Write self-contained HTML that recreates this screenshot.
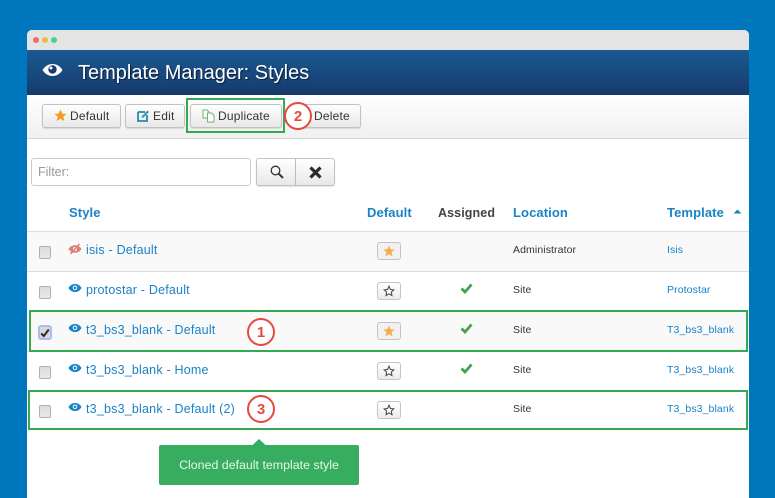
<!DOCTYPE html>
<html>
<head>
<meta charset="utf-8">
<style>
html,body{margin:0;padding:0}
body{width:775px;height:498px;background:#0076bc;overflow:hidden;position:relative;font-family:"Liberation Sans",sans-serif;color:#333}
.a{position:absolute}
#win{left:27px;top:30px;width:722px;height:468px;background:#fff;border-radius:5px 5px 0 0}
#bar{left:27px;top:30px;width:722px;height:20px;background:#e4e4e4;border-radius:5px 5px 0 0}
.dot{width:6px;height:6px;border-radius:50%;top:37px}
#head{left:27px;top:50px;width:722px;height:45px;background:linear-gradient(#1a5a92,#173a6b)}
#title{left:78px;top:61px;font-size:20px;line-height:24px;color:#fff;text-shadow:1px 1px 1px #0a1c38;white-space:nowrap}
#tool{left:27px;top:95px;width:722px;height:43px;background:linear-gradient(#fff,#f0f0f0);border-bottom:1px solid #d6d6d6}
.btn{box-sizing:border-box;height:24px;top:104px;border:1px solid #c2c2c2;border-radius:3px;background:linear-gradient(#fff,#e9e9e9);box-shadow:0 1px 1px rgba(0,0,0,.12);font-size:12px;letter-spacing:.2px;line-height:22px;color:#333;white-space:nowrap}
.btn span{position:absolute;top:0}
.btn svg{position:absolute}
.th{top:205px;font-size:13px;font-weight:bold;letter-spacing:.1px;line-height:15px;color:#1a82c8;white-space:nowrap}
.line{left:27px;width:722px;height:1px;background:#ddd}
.lnk{font-size:12.5px;letter-spacing:.2px;line-height:16px;color:#1a82c8;white-space:nowrap}
.sm{font-size:10.5px;letter-spacing:.1px;line-height:14px;white-space:nowrap}
.cb{box-sizing:border-box;left:39px;width:12px;height:13px;border:1px solid #b0b0b0;border-radius:2px;background:linear-gradient(#dcdcdc,#e8e8e8)}
.sb{box-sizing:border-box;left:377px;width:24px;height:18px;border:1px solid #c4c4c4;border-radius:3px;background:linear-gradient(#fff,#ececec)}
.sb.on{background:#f1f1f1}
.sb svg{position:absolute;left:5px;top:2px}
.gb{box-sizing:border-box;border:2px solid #34a853}
.cir{box-sizing:border-box;width:28px;height:28px;border:2px solid #e8493f;border-radius:50%;background:#fff;color:#e8493f;font-size:15px;font-weight:bold;line-height:26px;text-align:center}
</style>
</head>
<body>
<div class="a" id="win"></div>
<div class="a" id="bar"></div>
<div class="a dot" style="left:33px;background:#ee6a6a"></div>
<div class="a dot" style="left:42px;background:#e8bf44"></div>
<div class="a dot" style="left:51px;background:#3ed68c"></div>

<div class="a" id="head"></div>
<svg class="a" style="left:42px;top:63px" width="21" height="14" viewBox="0 0 21 14"><path d="M0.500 7C3 3 6.500 1 10.500 1S18 3 20.500 7C18 11 14.500 13 10.500 13S3 11 0.500 7Z" fill="#fff"/><circle cx="10.500" cy="6.500" r="4.200" fill="#173a6b"/><circle cx="9" cy="5" r="1.500" fill="#fff"/></svg>
<div class="a" id="title">Template Manager: Styles</div>

<div class="a" id="tool"></div>
<div class="a btn" style="left:42px;width:79px"><svg style="left:11px;top:4px" width="13" height="13" viewBox="0 0 14 14"><path d="M7 0.500L9 5L13.500 5.400L10 8.400L11.200 13L7 10.500L2.800 13L4 8.400L0.500 5.400L5 5Z" fill="#f39c1f"/></svg><span style="left:27px">Default</span></div>
<div class="a btn" style="left:125px;width:60px"><svg style="left:11px;top:4px" width="13" height="13" viewBox="0 0 13 13"><path d="M1 3H8M1 3V12H10V6" fill="none" stroke="#3a94b8" stroke-width="2"/><path d="M5 7L10.500 1.500L12 3L6.500 8.500L4.500 9Z" fill="#3a94b8"/></svg><span style="left:27px">Edit</span></div>
<div class="a btn" style="left:190px;width:92px"><svg style="left:11px;top:4px" width="14" height="14" viewBox="0 0 14 14"><path d="M1 1H5L7 3V9H1Z" fill="#fff" stroke="#6cb56c"/><path d="M5.500 4H9.500L12 6.500V13H5.500Z" fill="#fff" stroke="#6cb56c"/></svg><span style="left:27px">Duplicate</span></div>
<div class="a btn" style="left:298px;width:63px"><span style="left:15px">Delete</span></div>
<div class="a gb" style="left:186px;top:98px;width:99px;height:35px"></div>
<div class="a cir" style="left:284px;top:102px">2</div>

<div class="a" style="box-sizing:border-box;left:31px;top:158px;width:220px;height:28px;border:1px solid #ccc;border-radius:3px;background:#fff;font-size:12.5px;line-height:26px;color:#999;padding-left:6px">Filter:</div>
<div class="a" style="box-sizing:border-box;left:256px;top:158px;width:79px;height:28px;border:1px solid #c2c2c2;border-radius:3px;background:linear-gradient(#fff,#e8e8e8);box-shadow:0 1px 1px rgba(0,0,0,.12)"></div>
<div class="a" style="left:295px;top:159px;width:1px;height:26px;background:#bbb"></div>
<svg class="a" style="left:270px;top:165px" width="14" height="14" viewBox="0 0 14 14"><circle cx="5.500" cy="5.500" r="4.300" fill="none" stroke="#333" stroke-width="1.300"/><path d="M8.800 8.800L13 13" stroke="#333" stroke-width="2"/></svg>
<svg class="a" style="left:309px;top:166px" width="13" height="13" viewBox="0 0 13 13"><path d="M1.500 1.500L11.500 11.500M11.500 1.500L1.500 11.500" stroke="#2b2b2b" stroke-width="3.200"/></svg>

<div class="a th" style="left:69px">Style</div>
<div class="a th" style="left:367px">Default</div>
<div class="a th" style="left:438px;top:206px;color:#444;font-size:12.500px">Assigned</div>
<div class="a th" style="left:513px">Location</div>
<div class="a th" style="left:667px">Template</div>
<svg class="a" style="left:733px;top:209px" width="9" height="5" viewBox="0 0 9 5"><path d="M0.500 4.500L4.500 0.500L8.500 4.500Z" fill="#1a82c8"/></svg>

<div class="a" style="left:27px;top:231px;width:722px;height:40px;background:#f9f9f9"></div>
<div class="a" style="left:27px;top:311px;width:722px;height:40px;background:#f9f9f9"></div>
<div class="a line" style="top:231px"></div>
<div class="a line" style="top:271px"></div>
<div class="a line" style="top:351px"></div>

<!-- Row 1 -->
<div class="a cb" style="top:246px"></div>
<svg class="a" style="left:68px;top:243px" width="14" height="12" viewBox="0 0 14 12"><path d="M0.500 6C2 3.500 4.300 2.200 7 2.200S12 3.500 13.500 6C12 8.500 9.700 9.800 7 9.800S2 8.500 0.500 6Z" fill="#d9827c"/><circle cx="7" cy="6" r="2" fill="#f9f9f9"/><path d="M2.500 11L11.500 1" stroke="#d9827c" stroke-width="1.600"/></svg>
<div class="a lnk" style="left:86px;top:242px">isis - Default</div>
<div class="a sb on" style="top:242px"><svg width="12" height="12" viewBox="0 0 12 12"><path d="M6 0.500L7.700 4.200L11.500 4.600L8.600 7.200L9.500 11.200L6 9.100L2.500 11.200L3.400 7.200L0.500 4.600L4.300 4.200Z" fill="#f7ad4f"/></svg></div>
<div class="a sm" style="left:513px;top:243px">Administrator</div>
<div class="a sm" style="left:667px;top:243px;color:#1a82c8">Isis</div>

<!-- Row 2 -->
<div class="a cb" style="top:286px"></div>
<svg class="a" style="left:68px;top:283px" width="14" height="10" viewBox="0 0 14 10"><path d="M0.500 5C2 2.300 4.300 1 7 1S12 2.300 13.500 5C12 7.700 9.700 9 7 9S2 7.700 0.500 5Z" fill="#1a82c8"/><circle cx="7" cy="4.800" r="2.300" fill="#fff"/><circle cx="7" cy="4.800" r="1.300" fill="#1a82c8"/></svg>
<div class="a lnk" style="left:86px;top:282px">protostar - Default</div>
<div class="a sb" style="top:282px"><svg width="12" height="12" viewBox="0 0 12 12"><path d="M6 1.200L7.400 4.500L10.800 4.900L8.300 7.100L9 10.600L6 8.800L3 10.600L3.700 7.100L1.200 4.900L4.600 4.500Z" fill="#fff" stroke="#444"/></svg></div>
<svg class="a" style="left:460px;top:283px" width="13" height="11" viewBox="0 0 13 11"><path d="M1.500 5.500L5 9L11.500 1.500" fill="none" stroke="#46a04e" stroke-width="2.800"/></svg>
<div class="a sm" style="left:513px;top:283px">Site</div>
<div class="a sm" style="left:667px;top:283px;color:#1a82c8">Protostar</div>

<!-- Row 3 -->
<div class="a" style="box-sizing:border-box;left:38px;top:325px;width:14px;height:15px;border:2px solid #a5c0ee;border-radius:3px;background:#d8d8d8"></div>
<svg class="a" style="left:40px;top:328px" width="10" height="10" viewBox="0 0 10 10"><path d="M1.200 5.500L3.800 8L8.800 1.500" fill="none" stroke="#2b2b2b" stroke-width="2"/></svg>
<svg class="a" style="left:68px;top:323px" width="14" height="10" viewBox="0 0 14 10"><path d="M0.500 5C2 2.300 4.300 1 7 1S12 2.300 13.500 5C12 7.700 9.700 9 7 9S2 7.700 0.500 5Z" fill="#1a82c8"/><circle cx="7" cy="4.800" r="2.300" fill="#f9f9f9"/><circle cx="7" cy="4.800" r="1.300" fill="#1a82c8"/></svg>
<div class="a lnk" style="left:86px;top:322px">t3_bs3_blank - Default</div>
<div class="a sb on" style="top:322px"><svg width="12" height="12" viewBox="0 0 12 12"><path d="M6 0.500L7.700 4.200L11.500 4.600L8.600 7.200L9.500 11.200L6 9.100L2.500 11.200L3.400 7.200L0.500 4.600L4.300 4.200Z" fill="#f7ad4f"/></svg></div>
<svg class="a" style="left:460px;top:323px" width="13" height="11" viewBox="0 0 13 11"><path d="M1.500 5.500L5 9L11.500 1.500" fill="none" stroke="#46a04e" stroke-width="2.800"/></svg>
<div class="a sm" style="left:513px;top:323px">Site</div>
<div class="a sm" style="left:667px;top:323px;color:#1a82c8">T3_bs3_blank</div>
<div class="a gb" style="left:29px;top:310px;width:719px;height:42px"></div>
<div class="a cir" style="left:247px;top:318px">1</div>

<!-- Row 4 -->
<div class="a cb" style="top:366px"></div>
<svg class="a" style="left:68px;top:363px" width="14" height="10" viewBox="0 0 14 10"><path d="M0.500 5C2 2.300 4.300 1 7 1S12 2.300 13.500 5C12 7.700 9.700 9 7 9S2 7.700 0.500 5Z" fill="#1a82c8"/><circle cx="7" cy="4.800" r="2.300" fill="#fff"/><circle cx="7" cy="4.800" r="1.300" fill="#1a82c8"/></svg>
<div class="a lnk" style="left:86px;top:362px">t3_bs3_blank - Home</div>
<div class="a sb" style="top:362px"><svg width="12" height="12" viewBox="0 0 12 12"><path d="M6 1.200L7.400 4.500L10.800 4.900L8.300 7.100L9 10.600L6 8.800L3 10.600L3.700 7.100L1.200 4.900L4.600 4.500Z" fill="#fff" stroke="#444"/></svg></div>
<svg class="a" style="left:460px;top:363px" width="13" height="11" viewBox="0 0 13 11"><path d="M1.500 5.500L5 9L11.500 1.500" fill="none" stroke="#46a04e" stroke-width="2.800"/></svg>
<div class="a sm" style="left:513px;top:363px">Site</div>
<div class="a sm" style="left:667px;top:363px;color:#1a82c8">T3_bs3_blank</div>

<!-- Row 5 -->
<div class="a cb" style="top:405px"></div>
<svg class="a" style="left:68px;top:402px" width="14" height="10" viewBox="0 0 14 10"><path d="M0.500 5C2 2.300 4.300 1 7 1S12 2.300 13.500 5C12 7.700 9.700 9 7 9S2 7.700 0.500 5Z" fill="#1a82c8"/><circle cx="7" cy="4.800" r="2.300" fill="#fff"/><circle cx="7" cy="4.800" r="1.300" fill="#1a82c8"/></svg>
<div class="a lnk" style="left:86px;top:401px">t3_bs3_blank - Default (2)</div>
<div class="a sb" style="top:401px"><svg width="12" height="12" viewBox="0 0 12 12"><path d="M6 1.200L7.400 4.500L10.800 4.900L8.300 7.100L9 10.600L6 8.800L3 10.600L3.700 7.100L1.200 4.900L4.600 4.500Z" fill="#fff" stroke="#444"/></svg></div>
<div class="a sm" style="left:513px;top:402px">Site</div>
<div class="a sm" style="left:667px;top:402px;color:#1a82c8">T3_bs3_blank</div>
<div class="a gb" style="left:28px;top:390px;width:720px;height:40px"></div>
<div class="a cir" style="left:247px;top:395px">3</div>

<!-- Tooltip -->
<svg class="a" style="left:252px;top:439px" width="14" height="7" viewBox="0 0 14 7"><path d="M0 6.500L7 0L14 6.500V7H0Z" fill="#37ad5f"/></svg>
<div class="a" style="left:159px;top:445px;width:200px;height:40px;background:#37ad5f;border-radius:2px;color:#e8f6ec;font-size:12.400px;line-height:41px;text-align:center;white-space:nowrap">Cloned default template style</div>
</body>
</html>
